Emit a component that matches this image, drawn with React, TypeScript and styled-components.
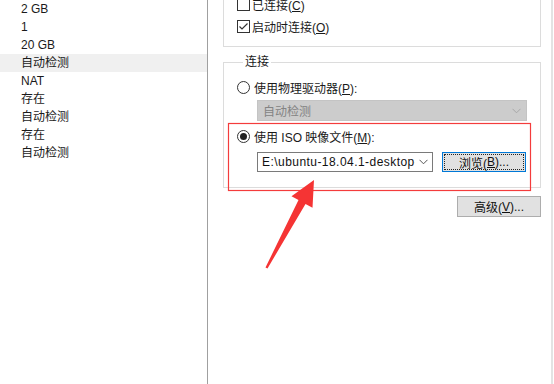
import React from 'react'
import styled, { createGlobalStyle } from 'styled-components'

const GlobalStyle = createGlobalStyle`
  html, body {
    margin: 0;
    padding: 0;
    background: #ffffff;
  }
`

const UI_FONT = `"Liberation Sans", "Noto Sans CJK SC", sans-serif`

const Screen = styled.div`
  position: relative;
  width: 554px;
  height: 384px;
  display: flex;
  overflow: hidden;
  background: #ffffff;
  font-family: ${UI_FONT};
  font-size: 12px;
  color: #1a1a1a;
`

const SummaryPane = styled.div`
  width: 207px;
  flex-shrink: 0;
  border-right: 1px solid #a0a0a0;
  display: flex;
  flex-direction: column;
`

const SummaryRow = styled.div<{ $active?: boolean }>`
  height: 18px;
  line-height: 18px;
  padding-left: 21px;
  background: ${p => (p.$active ? '#f0f0f0' : 'transparent')};
  white-space: nowrap;
`

const DetailPane = styled.div`
  width: 345px;
  flex-shrink: 0;
  border-right: 2px solid #e3e3e3;
  padding: 0 10px 0 15px;
  box-sizing: border-box;
  display: flex;
  flex-direction: column;
`

const StatusGroup = styled.div`
  margin-top: -19px;
  height: 66px;
  border: 1px solid #dcdcdc;
  box-sizing: border-box;
  padding: 11px 0 0 13px;
  display: flex;
  flex-direction: column;
`

const ConnectGroup = styled.fieldset`
  margin: 7px 0 0 0;
  padding: 6px 12px 0 13px;
  border: 1px solid #dcdcdc;
  height: 134px;
  box-sizing: border-box;
  min-width: 0;
`

const GroupTitle = styled.legend`
  padding: 0 2px;
  margin-left: 6px;
  line-height: 16px;
  font-size: 12px;
`

const OptionRow = styled.label<{ $gap?: number }>`
  display: flex;
  align-items: center;
  height: 22px;
  flex-shrink: 0;
  gap: ${p => p.$gap ?? 2}px;
  white-space: nowrap;
`

const Key = styled.span`
  text-decoration: underline;
  text-underline-offset: 1px;
`

const FieldRow = styled.div`
  display: flex;
  align-items: center;
  gap: 9px;
  margin-left: 20px;
`

const DisabledSelect = styled.div`
  width: 270px;
  height: 21px;
  box-sizing: border-box;
  margin: 2px 0 0 20px;
  background: #cccccc;
  border: 1px solid #c4c4c4;
  color: #838383;
  display: flex;
  align-items: center;
  justify-content: space-between;
  padding: 0 5px 0 5px;
`

const PathCombo = styled.div`
  width: 176px;
  height: 20px;
  box-sizing: border-box;
  border: 1px solid #7a7a7a;
  background: #ffffff;
  display: flex;
  align-items: center;
  padding: 0 4px 0 4px;
  gap: 4px;
`

const PathText = styled.span`
  flex: 1;
  overflow: hidden;
  white-space: nowrap;
  letter-spacing: 0.45px;
  color: #111;
`

const PushButton = styled.div<{ $focused?: boolean }>`
  width: 84px;
  height: ${p => (p.$focused ? 20 : 21)}px;
  box-sizing: border-box;
  background: #e1e1e1;
  border: 1px solid ${p => (p.$focused ? '#0078d7' : '#adadad')};
  padding: 1px;
  display: flex;
  color: #111;
`

const ButtonFace = styled.span<{ $focused?: boolean }>`
  flex: 1;
  display: flex;
  align-items: center;
  justify-content: center;
  border: 1px ${p => (p.$focused ? 'dotted #222' : 'solid transparent')};
`

const SpacedRow = styled.div<{ $top: number }>`
  margin-top: ${p => p.$top}px;
`

const ButtonBar = styled.div`
  display: flex;
  justify-content: flex-end;
  margin-top: 8px;
`

const Annotation = styled.svg`
  position: absolute;
  left: 0;
  top: 0;
  pointer-events: none;
`

const CheckBox = ({ checked }: { checked?: boolean }) => (
  <svg width="13" height="13" viewBox="0 0 13 13">
    <rect x="0.5" y="0.5" width="12" height="12" fill="#fff" stroke="#333" />
    {checked && <path d="M2.5 6.5 L5 9 L10.5 3.5" fill="none" stroke="#333" strokeWidth="1.2" />}
  </svg>
)

const Radio = ({ checked }: { checked?: boolean }) => (
  <svg width="13" height="13" viewBox="0 0 13 13">
    <circle cx="6.5" cy="6.5" r="6" fill="#fff" stroke="#333" />
    {checked && <circle cx="6.5" cy="6.5" r="3.5" fill="#222" />}
  </svg>
)

const Chevron = ({ color }: { color: string }) => (
  <svg width="9" height="6" viewBox="0 0 9 6">
    <path d="M0.5 0.8 L4.5 4.8 L8.5 0.8" fill="none" stroke={color} strokeWidth="1" />
  </svg>
)

const summary = ['2 GB', '1', '20 GB', '自动检测', 'NAT', '存在', '自动检测', '存在', '自动检测']

export default function App() {
  return (
    <>
      <GlobalStyle />
      <Screen>
        <SummaryPane>
          {summary.map((s, i) => (
            <SummaryRow key={i} $active={i === 3}>{s}</SummaryRow>
          ))}
        </SummaryPane>

        <DetailPane>
          <StatusGroup>
            <OptionRow>
              <CheckBox />
              <span>已连接(<Key>C</Key>)</span>
            </OptionRow>
            <OptionRow>
              <CheckBox checked />
              <span>启动时连接(<Key>O</Key>)</span>
            </OptionRow>
          </StatusGroup>

          <ConnectGroup>
            <GroupTitle>连接</GroupTitle>
            <OptionRow $gap={4}>
              <Radio />
              <span>使用物理驱动器(<Key>P</Key>):</span>
            </OptionRow>
            <DisabledSelect>
              <span>自动检测</span>
              <Chevron color="#a8a8a8" />
            </DisabledSelect>
            <SpacedRow $top={4}>
              <OptionRow $gap={4}>
                <Radio checked />
                <span>使用 ISO 映像文件(<Key>M</Key>):</span>
              </OptionRow>
            </SpacedRow>
            <SpacedRow $top={5}>
              <FieldRow>
                <PathCombo>
                  <PathText>E:\ubuntu-18.04.1-desktop-amd64.iso</PathText>
                  <Chevron color="#555" />
                </PathCombo>
                <PushButton $focused>
                  <ButtonFace $focused>浏览(<Key>B</Key>)...</ButtonFace>
                </PushButton>
              </FieldRow>
            </SpacedRow>
          </ConnectGroup>

          <ButtonBar>
            <PushButton>
              <ButtonFace>高级(<Key>V</Key>)...</ButtonFace>
            </PushButton>
          </ButtonBar>
        </DetailPane>

        <Annotation width="554" height="384" viewBox="0 0 554 384">
          <rect x="228.5" y="123.5" width="302" height="67" fill="none" stroke="#f43c3c" strokeWidth="1.2" />
          <polygon
            points="265.5,267.5 298.5,200 291.5,196.3 314,180 312.5,207.7 305.5,203.9 267.5,268.5"
            fill="#f53434"
          />
        </Annotation>
      </Screen>
    </>
  )
}
